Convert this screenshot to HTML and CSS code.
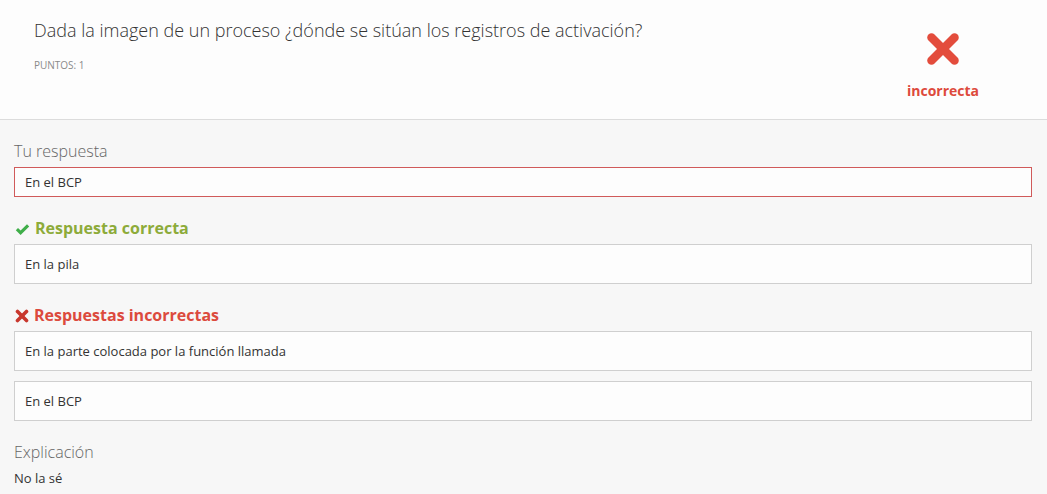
FILE: index.html
```html
<!DOCTYPE html>
<html lang="es">
<head>
<meta charset="utf-8">
<title>Pregunta</title>
<link rel="stylesheet" href="styles.css">
</head>
<body>
<div class="question-header">
  <div class="question-main">
    <div class="question-title">Dada la imagen de un proceso ¿dónde se sitúan los registros de activación?</div>
    <div class="question-points">PUNTOS: 1</div>
  </div>
  <div class="question-status">
    <svg class="status-icon" width="34" height="34" viewBox="0 0 34 34">
      <g stroke="#e34c3c" stroke-width="8.5" stroke-linecap="round">
        <line x1="5.5" y1="5.5" x2="28.5" y2="28.5"/>
        <line x1="28.5" y1="5.5" x2="5.5" y2="28.5"/>
      </g>
    </svg>
    <div class="status-text">incorrecta</div>
  </div>
</div>
<div class="question-body">
  <div class="label">Tu respuesta</div>
  <div class="answer-box answer-box--user">En el BCP</div>

  <div class="section-heading section-heading--correct">
    <svg class="heading-icon" width="15" height="13" viewBox="0 0 15 13">
      <path d="M0.8 7.2 L3 5 L5.6 7.6 L12 1.2 L14.2 3.4 L5.6 12 Z" fill="#3fae49"/>
    </svg>
    Respuesta correcta
  </div>
  <div class="answer-box">En la pila</div>

  <div class="section-heading section-heading--wrong">
    <svg class="heading-icon" width="14" height="14" viewBox="0 0 14 14">
      <g stroke="#c8372d" stroke-width="3.6" stroke-linecap="round">
        <line x1="2.5" y1="2.5" x2="11.5" y2="11.5"/>
        <line x1="11.5" y1="2.5" x2="2.5" y2="11.5"/>
      </g>
    </svg>
    Respuestas incorrectas
  </div>
  <div class="answer-list">
    <div class="answer-box">En la parte colocada por la función llamada</div>
    <div class="answer-box">En el BCP</div>
  </div>

  <div class="label label--explain">Explicación</div>
  <div class="explain-text">No la sé</div>
</div>
</body>
</html>
```

FILE: styles.css
```css
* {
  box-sizing: border-box;
}

html, body {
  margin: 0;
  padding: 0;
}

body {
  background: #f7f7f7;
  font-family: "Open Sans", "Liberation Sans", sans-serif;
  color: #333;
}

.question-header {
  display: flex;
  justify-content: space-between;
  background: #fdfdfd;
  border-bottom: 1px solid #dcdcdc;
  height: 120px;
}

.question-main {
  padding: 18px 0 0 34px;
}

.question-title {
  font-size: 18px;
  font-weight: 300;
  line-height: 24px;
  color: #333;
}

.question-points {
  margin-top: 16px;
  font-size: 10px;
  line-height: 14px;
  color: #8a8a8a;
}

.question-status {
  width: 140px;
  margin-right: 34px;
  padding-top: 32px;
  display: flex;
  flex-direction: column;
  align-items: center;
}

.status-icon {
  display: block;
}

.status-text {
  margin-top: 15px;
  font-size: 14px;
  font-weight: 700;
  line-height: 20px;
  color: #dd4a3c;
}

.question-body {
  padding: 20px 15px 0 14px;
}

.label {
  font-size: 16px;
  font-weight: 300;
  line-height: 22px;
  color: #666;
}

.answer-box {
  margin-top: 5px;
  background: #fdfdfd;
  border: 1px solid #cfcfcf;
  padding: 0 10px;
  height: 40px;
  line-height: 38px;
  font-size: 13px;
  color: #333;
}

.answer-box--user {
  height: 30px;
  line-height: 28px;
  border-color: #d05a5a;
}

.section-heading {
  margin-top: 19px;
  display: flex;
  align-items: center;
  gap: 5px;
  font-size: 16px;
  font-weight: 700;
  line-height: 24px;
}

.section-heading + .answer-box,
.section-heading + .answer-list {
  margin-top: 4px;
}

.section-heading--correct {
  color: #8dab3a;
}

.section-heading--wrong {
  color: #dc4a3d;
}

.heading-icon {
  display: block;
  margin-left: 1px;
  margin-top: 2px;
}

.answer-list {
  display: flex;
  flex-direction: column;
  gap: 10px;
}

.answer-list .answer-box {
  margin-top: 0;
}

.label--explain {
  margin-top: 20px;
}

.explain-text {
  margin-top: 5px;
  font-size: 13px;
  line-height: 20px;
  color: #333;
}
```
